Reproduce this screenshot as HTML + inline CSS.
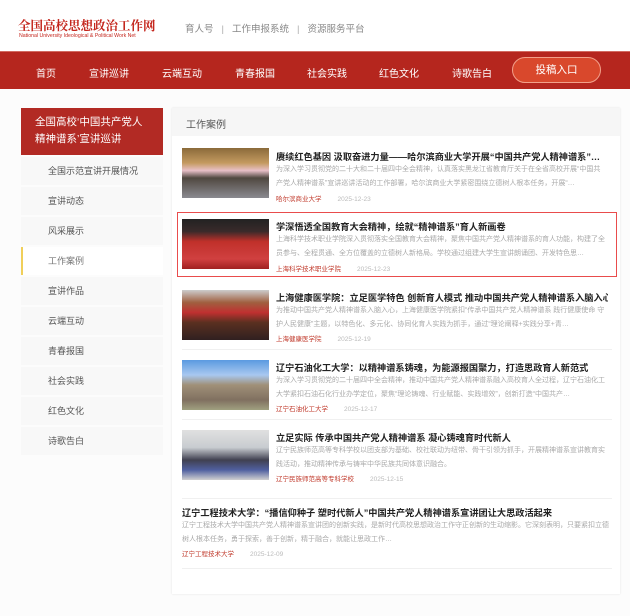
<!DOCTYPE html>
<html><head><meta charset="utf-8"><style>
*{margin:0;padding:0;box-sizing:border-box}
body{width:630px;height:616px;background:#fcfcfc;font-family:"Liberation Sans","Noto Sans CJK SC",sans-serif;position:relative;overflow:hidden}
.hdr{position:absolute;left:0;top:0;width:630px;height:51px;background:#fff}
.logo{position:absolute;left:18px;top:16px;color:#c4261d;font-family:"Noto Serif CJK SC",serif;font-size:12.5px;font-weight:bold;white-space:nowrap}
.logo2{position:absolute;left:19px;top:33px;color:#c4261d;font-size:5.2px;white-space:nowrap}
.links{position:absolute;left:185px;top:21px;font-size:9.5px;color:#888}
.links span{margin:0 8px;color:#aaa}
.nav{position:absolute;left:0;top:51px;width:630px;height:38px;background:#b5261e;border-top:1px solid #d26a60}
.nav a{position:absolute;top:13px;color:#fff;font-size:10px}
.btn{position:absolute;left:512px;top:5px;width:89px;height:26px;border-radius:13px;background:#d9482c;border:1px solid #f2a08a;color:#fff;font-size:10.5px;text-align:center;line-height:24px}
.side{position:absolute;left:21px;top:108px;width:142px}
.stitle{background:#b22a24;color:#fff;font-size:10.5px;line-height:17px;padding:6px 0 0 14px;height:47px;white-space:nowrap}
.side div.it{height:28px;margin-top:2px;background:#f8f8f8;font-size:9px;color:#555;padding-left:27px;line-height:28px}
.side div.cur{background:#fff;border-left:2px solid #f0cf5a;padding-left:25px;color:#777}
.main{position:absolute;left:172px;top:108px;width:448px;height:486px;background:#fff;box-shadow:0 0 2px #e4e4e4}
.mh{height:28px;background:#f6f6f6;color:#555;font-size:10px;padding:8px 14px}
.th{position:absolute;left:10px;width:87px;height:50px}
.t{position:absolute;left:104px;font-size:9.2px;font-weight:bold;color:#222;white-space:nowrap;overflow:hidden;width:332px}
.d{position:absolute;left:104px;font-size:7px;color:#aaa;line-height:13.5px;width:330px;height:27px;overflow:hidden}
.s{position:absolute;left:104px;font-size:6.5px;color:#c0392b}
.s i{font-style:normal;color:#bbb;margin-left:16px}
.sep{position:absolute;left:10px;width:430px;height:1px;background:#f0f0f0}
</style></head><body>
<div class="hdr">
<div class="logo">全国高校思想政治工作网</div>
<div class="logo2">National University Ideological &amp; Political Work Net</div>
<div class="links">育人号<span>|</span>工作申报系统<span>|</span>资源服务平台</div>
</div>
<div class="nav">
<a style="left:36px">首页</a><a style="left:89px">宣讲巡讲</a><a style="left:162px">云端互动</a><a style="left:235px">青春报国</a><a style="left:307px">社会实践</a><a style="left:379px">红色文化</a><a style="left:452px">诗歌告白</a>
<div class="btn">投稿入口</div>
</div>
<div class="side">
<div class="stitle">全国高校‘中国共产党人<br>精神谱系’宣讲巡讲</div>
<div class="it">全国示范宣讲开展情况</div>
<div class="it">宣讲动态</div>
<div class="it">风采展示</div>
<div class="it cur">工作案例</div>
<div class="it">宣讲作品</div>
<div class="it">云端互动</div>
<div class="it">青春报国</div>
<div class="it">社会实践</div>
<div class="it">红色文化</div>
<div class="it">诗歌告白</div>
</div>
<div class="main">
<div class="mh">工作案例</div>
<div style="position:absolute;left:5px;top:104px;width:440px;height:65px;border:1px solid #e94c4c"></div>
<div class="th" style="top:40px;background:linear-gradient(#8a6a3a 0,#c49a60 30%,#e8c0c8 45%,#504840 60%,#8a8a90)"></div>
<div class="t" style="top:41px">赓续红色基因 汲取奋进力量——哈尔滨商业大学开展“中国共产党人精神谱系”…</div>
<div class="d" style="top:55px">为深入学习贯彻党的二十大和二十届四中全会精神，认真落实黑龙江省教育厅关于在全省高校开展“中国共产党人精神谱系”宣讲巡讲活动的工作部署，哈尔滨商业大学紧密围绕立德树人根本任务，开展“…</div>
<div class="s" style="top:85px">哈尔滨商业大学<i>2025-12-23</i></div>
<div class="th" style="top:111px;background:linear-gradient(#222 0,#3a2a2a 25%,#c0302a 45%,#d04040 80%,#a02020)"></div>
<div class="t" style="top:111px">学深悟透全国教育大会精神，绘就“精神谱系”育人新画卷</div>
<div class="d" style="top:125px">上海科学技术职业学院深入贯彻落实全国教育大会精神，聚焦中国共产党人精神谱系的育人功能，构建了全员参与、全程贯通、全方位覆盖的立德树人新格局。学校通过组建大学生宣讲朗诵团、开发特色思…</div>
<div class="s" style="top:155px">上海科学技术职业学院<i>2025-12-23</i></div>
<div class="th" style="top:182px;background:linear-gradient(#ccc 0,#a06040 25%,#c03030 45%,#5a3020 65%,#302020)"></div>
<div class="t" style="top:182px">上海健康医学院：立足医学特色 创新育人模式 推动中国共产党人精神谱系入脑入心</div>
<div class="d" style="top:196px">为推动中国共产党人精神谱系入脑入心，上海健康医学院紧扣“传承中国共产党人精神谱系 践行健康使命 守护人民健康”主题，以特色化、多元化、协同化育人实践为抓手，通过“理论阐释+实践分享+青…</div>
<div class="s" style="top:225px">上海健康医学院<i>2025-12-19</i></div>
<div class="sep" style="top:241px"></div>
<div class="th" style="top:252px;background:linear-gradient(#5a9ae0 0,#a8c8f0 30%,#a09078 50%,#807060 80%,#a0a080)"></div>
<div class="t" style="top:252px">辽宁石油化工大学：以精神谱系铸魂，为能源报国聚力，打造思政育人新范式</div>
<div class="d" style="top:266px">为深入学习贯彻党的二十届四中全会精神，推动中国共产党人精神谱系融入高校育人全过程，辽宁石油化工大学紧扣石油石化行业办学定位，聚焦“理论铸魂、行业赋能、实践增效”，创新打造“中国共产…</div>
<div class="s" style="top:295px">辽宁石油化工大学<i>2025-12-17</i></div>
<div class="sep" style="top:311px"></div>
<div class="th" style="top:322px;background:linear-gradient(#e0e0e0 0,#c8ccd0 35%,#404050 60%,#5060a0 80%,#d0d0d0)"></div>
<div class="t" style="top:322px">立足实际 传承中国共产党人精神谱系 凝心铸魂育时代新人</div>
<div class="d" style="top:336px">辽宁民族师范高等专科学校以团支部为基础、校社联动为纽带、骨干引领为抓手，开展精神谱系宣讲教育实践活动，推动精神传承与铸牢中华民族共同体意识融合。</div>
<div class="s" style="top:365px">辽宁民族师范高等专科学校<i>2025-12-15</i></div>
<div class="sep" style="top:390px"></div>
<div class="t" style="top:397px;left:10px;width:430px">辽宁工程技术大学：“播信仰种子 塑时代新人”中国共产党人精神谱系宣讲团让大思政活起来</div>
<div class="d" style="top:411px;left:10px;width:430px">辽宁工程技术大学中国共产党人精神谱系宣讲团的创新实践，是新时代高校思想政治工作守正创新的生动缩影。它深刻表明，只要紧扣立德树人根本任务，勇于探索，善于创新，精于融合，就能让思政工作…</div>
<div class="s" style="top:440px;left:10px">辽宁工程技术大学<i>2025-12-09</i></div>
<div class="sep" style="top:460px"></div>
</div>
</body></html>
